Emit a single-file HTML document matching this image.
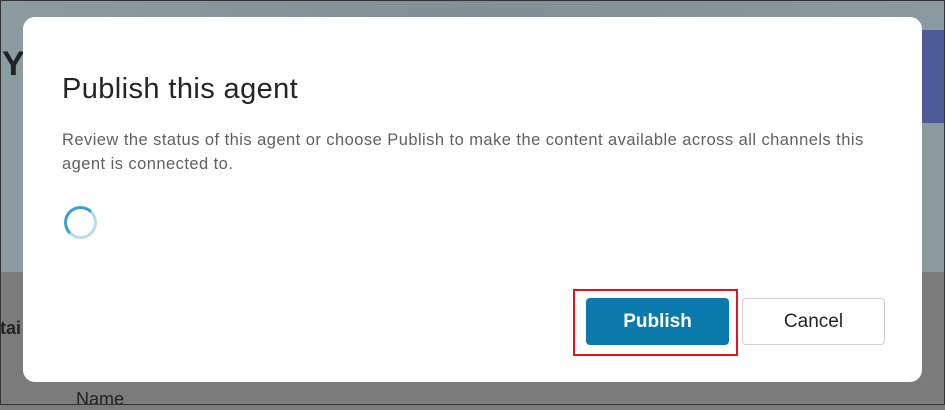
<!DOCTYPE html>
<html><head><style>
body{margin:0;width:945px;height:405px;overflow:hidden;font-family:"Liberation Sans",sans-serif;position:relative;background:#7b7b7b}
.bgtop{position:absolute;left:0;top:0;width:945px;height:272px;background:linear-gradient(90deg,#8a9ca0,#7f9196 50%,#8a9a9e)}
.bar{position:absolute;left:922px;top:30px;width:23px;height:93px;background:#4d5a98}
.y{position:absolute;left:2px;top:45px;font-size:34px;font-weight:bold;color:#222}
.tai{position:absolute;left:0;top:318px;font-size:18px;font-weight:bold;color:#222}
.name{position:absolute;left:76px;top:389px;font-size:18px;color:#222}
.dlg{position:absolute;left:23px;top:17px;width:899px;height:365px;background:#fff;border-radius:12px}
h1{position:absolute;left:39px;top:56px;margin:0;font-size:29px;letter-spacing:0.4px;font-weight:normal;color:#242424}
p{position:absolute;left:39px;top:111px;margin:0;width:830px;font-size:16.5px;letter-spacing:0.45px;line-height:24px;color:#616161}
.spin{position:absolute;left:41px;top:189px;width:27px;height:27px;border-radius:50%;border:3px solid #b8dcec;border-top-color:#3a9fd0;border-left-color:#3a9fd0}
.red{position:absolute;left:573px;top:289px;width:161px;height:63px;border:2px solid #e3141e}
.pub{position:absolute;left:586px;top:298px;width:143px;height:47px;background:#0a7aad;border-radius:4px;color:#fff;font-weight:bold;font-size:19px;text-align:center;line-height:47px}
.can{position:absolute;left:742px;top:298px;width:141px;height:45px;border:1px solid #d1d1d1;border-radius:4px;color:#242424;font-size:19px;text-align:center;line-height:45px;background:#fff}
.frame{position:absolute;left:0;top:0;width:943px;height:403px;border:1px solid #333}
</style></head><body>
<div class="bgtop"></div>
<div class="bar"></div>
<div class="y">Y</div>
<div class="tai">tai</div>
<div class="name">Name</div>
<div class="dlg">
<h1>Publish this agent</h1>
<p>Review the status of this agent or choose Publish to make the content available across all channels this agent is connected to.</p>
<div class="spin"></div>
</div>
<div class="red"></div>
<div class="pub">Publish</div>
<div class="can">Cancel</div>
<div class="frame"></div>
</body></html>
